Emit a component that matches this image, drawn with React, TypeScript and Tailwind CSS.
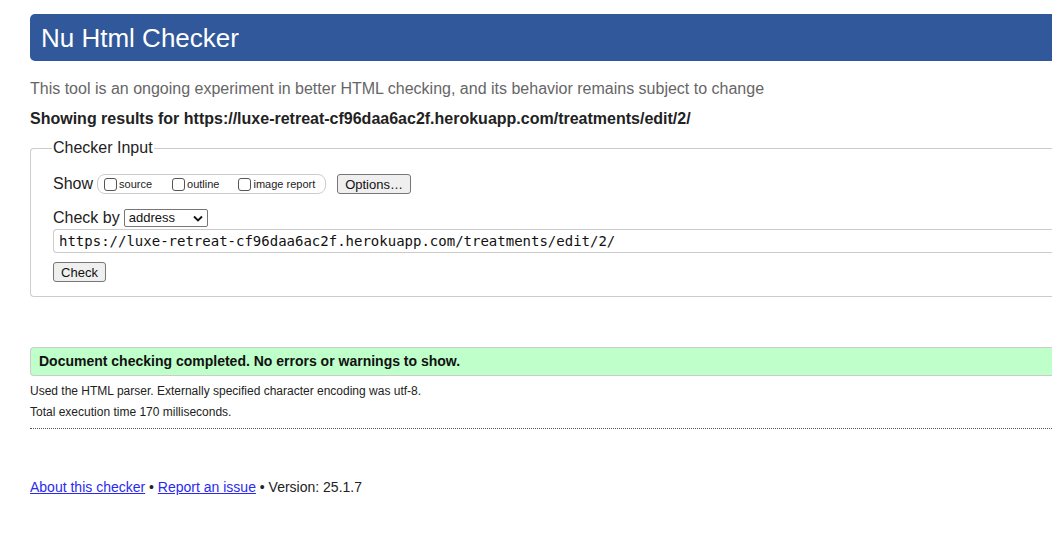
import React from 'react';

export default function App() {
  return (
    <div className="w-full min-h-[556px] bg-white overflow-hidden" style={{ fontFamily: '"Liberation Sans", Arial, sans-serif' }}>
      <div className="ml-[30px] w-[1040px] pt-[14px]">
        {/* Header */}
        <div className="h-[47px] bg-[#30589a] rounded-l-[5px] flex items-center pl-[11px]">
          <h1 className="text-white text-[26px] leading-none">Nu Html Checker</h1>
        </div>

        <p className="mt-[18px] text-[16px] leading-[20px] text-[#666]">
          This tool is an ongoing experiment in better HTML checking, and its behavior remains subject to change
        </p>
        <p className="mt-[10px] text-[16px] leading-[20px] font-bold text-[#222]">
          Showing results for https://luxe-retreat-cf96daa6ac2f.herokuapp.com/treatments/edit/2/
        </p>

        {/* Checker Input */}
        <fieldset className="mt-[9px] border border-[#ccc] rounded-l-[4px] border-r-0 pl-[22px] pb-[12px]">
          <legend className="px-[1px] -ml-[1px] text-[16px] leading-[20px] text-[#222]">Checker Input</legend>

          <div className="mt-[15px] flex items-center h-[22px]">
            <span className="text-[16px] text-[#222]">Show</span>
            <div className="ml-[4px] h-[20px] w-[229px] border border-[#ccc] rounded-[8px] flex items-center pl-[6px] text-[11px] text-[#222]">
              <label className="flex items-center">
                <span className="w-[13px] h-[13px] border border-[#555] rounded-[3px] mr-[2px]" />
                source
              </label>
              <label className="flex items-center ml-[20px]">
                <span className="w-[13px] h-[13px] border border-[#555] rounded-[3px] mr-[2px]" />
                outline
              </label>
              <label className="flex items-center ml-[19px]">
                <span className="w-[13px] h-[13px] border border-[#555] rounded-[3px] mr-[2px]" />
                image report
              </label>
            </div>
            <button className="ml-[11px] h-[20px] w-[74px] border border-[#767676] rounded-[3px] bg-[#efefef] text-[13px] text-[#111] leading-none">
              Options…
            </button>
          </div>

          <div className="mt-[13px] flex items-center h-[20px]">
            <span className="text-[16px] text-[#222]">Check by</span>
            <div className="ml-[4px] h-[18px] w-[84px] border border-[#767676] rounded-[2px] flex items-center justify-between px-[4px] text-[13px] text-[#111]">
              <span>address</span>
              <svg width="10" height="7" viewBox="0 0 10 7"><path d="M1 1.5 L5 5.5 L9 1.5" fill="none" stroke="#111" strokeWidth="1.8" /></svg>
            </div>
          </div>

          <div className="mt-[1px] h-[24px] border border-[#ccc] border-r-0 rounded-l-[4px] flex items-center pl-[5px] text-[14px] text-[#111]" style={{ fontFamily: '"DejaVu Sans Mono", "Liberation Mono", monospace' }}>
            https://luxe-retreat-cf96daa6ac2f.herokuapp.com/treatments/edit/2/
          </div>

          <button className="mt-[9px] h-[20px] w-[53px] border border-[#767676] rounded-[3px] bg-[#efefef] text-[13px] text-[#111] leading-none">
            Check
          </button>
        </fieldset>

        {/* Result */}
        <div className="mt-[50px] h-[29px] bg-[#bfffca] border-y border-l border-[#ccc] rounded-l-[4px] flex items-center pl-[8px]">
          <span className="text-[14px] font-bold text-[#111]">Document checking completed. No errors or warnings to show.</span>
        </div>
        <p className="mt-[8px] text-[12px] leading-[15px] text-[#222]">
          Used the HTML parser. Externally specified character encoding was utf-8.
        </p>
        <p className="mt-[6px] text-[12px] leading-[15px] text-[#222]">Total execution time 170 milliseconds.</p>
        <div className="mt-[8px] border-t border-dotted border-[#555]" />

        {/* Footer */}
        <p className="mt-[49px] text-[14px] leading-[18px] text-[#222]">
          <a href="#" className="text-[#2a2aef] underline">About this checker</a>
          {' • '}
          <a href="#" className="text-[#2a2aef] underline">Report an issue</a>
          {' • Version: 25.1.7'}
        </p>
      </div>
    </div>
  );
}
